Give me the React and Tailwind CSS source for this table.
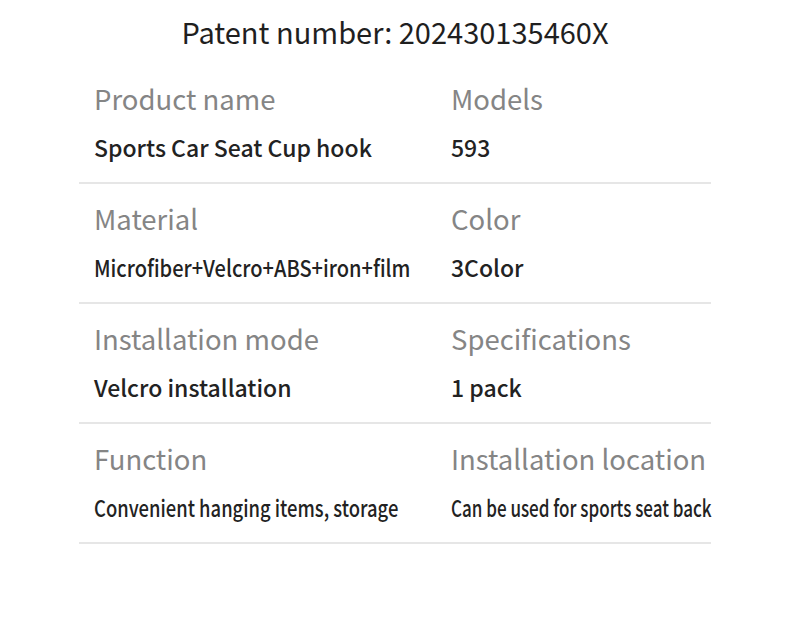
import React from "react";

const rows = [
  { l1: "Product name", v1: "Sports Car Seat Cup hook", l2: "Models", v2: "593" },
  { l1: "Material", v1: "Microfiber+Velcro+ABS+iron+film", l2: "Color", v2: "3Color", s1: "scale-x-[0.87]" },
  { l1: "Installation mode", v1: "Velcro installation", l2: "Specifications", v2: "1 pack" },
  {
    l1: "Function",
    v1: "Convenient hanging items, storage",
    l2: "Installation location",
    v2: "Can be used for sports seat back",
    s1: "scale-x-[0.8]",
    s2: "scale-x-[0.74]",
  },
];

const Cell = ({ label, value, squeeze }) => (
  <div className="flex flex-col">
    <div className="h-10 leading-[40px] text-[27.5px] text-[#858585] whitespace-nowrap">{label}</div>
    <div className="mt-[14px] h-[30px] leading-[30px] text-[23px] font-medium text-[#222222] whitespace-nowrap">
      <span className={`inline-block origin-left ${squeeze || ""}`}>{value}</span>
    </div>
  </div>
);

const App = () => {
  return (
    <div
      className="w-[790px] h-[623px] bg-white overflow-hidden"
      style={{ fontFamily: '"Noto Sans CJK SC", "Noto Sans", sans-serif' }}
    >
      <div className="h-[64px] flex items-center justify-center text-[29px] text-[#1f1f1f]">
        Patent number: 202430135460X
      </div>

      <div className="ml-[79px] w-[632px]">
        {rows.map((r) => (
          <div key={r.l1} className="h-[120px] pt-[14px] pl-[15px] grid grid-cols-[357px_1fr] border-b-2 border-[#e6e6e6]">
            <Cell label={r.l1} value={r.v1} squeeze={r.s1} />
            <Cell label={r.l2} value={r.v2} squeeze={r.s2} />
          </div>
        ))}
      </div>
    </div>
  );
};

export default App;
